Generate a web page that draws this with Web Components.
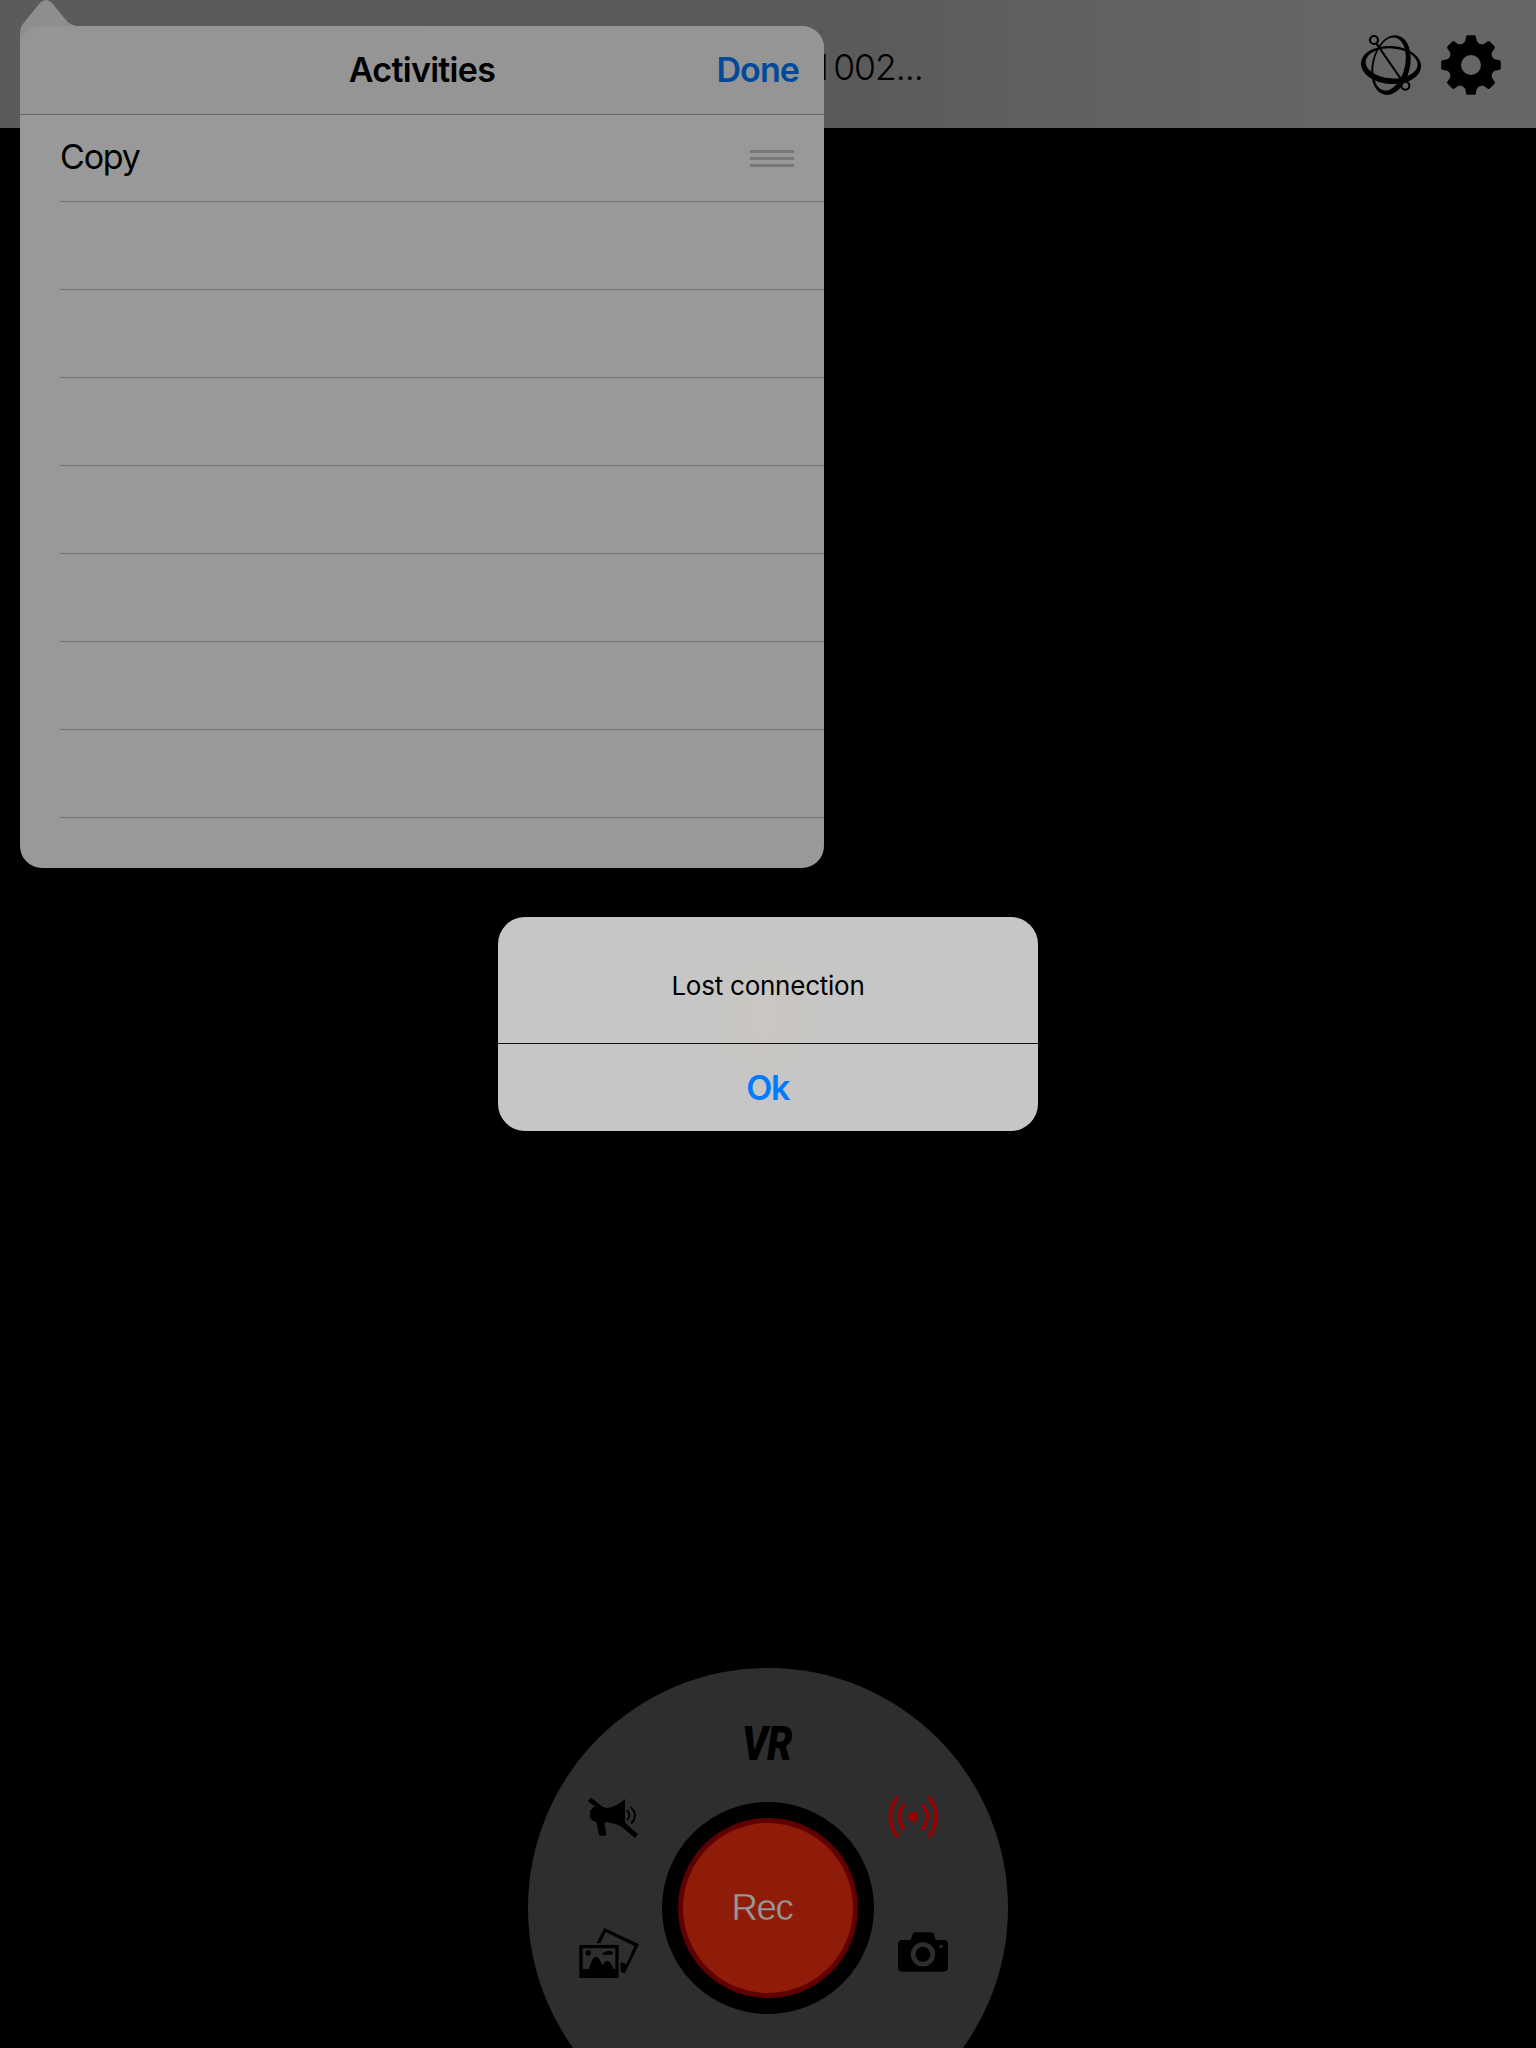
<!DOCTYPE html>
<html lang="en">
<head>
<meta charset="utf-8">
<title>Camera remote</title>
<style>
html,body{margin:0;background:#000}
body{width:1536px;height:2048px;overflow:hidden;font-family:Inter,"Liberation Sans",sans-serif;color:#000}
</style>
</head>
<body>
<camera-screen></camera-screen>
<script>
const define = (name, html) => customElements.define(name, class extends HTMLElement {
  constructor() {
    super();
    this.attachShadow({ mode: 'open' }).innerHTML = html;
  }
});

/* Eight-tooth gear outline with scooped valleys between the teeth. */
const gearPath = () => {
  const rot = (x, y, a) => {
    const c = Math.cos(a), s = Math.sin(a);
    return (x * c - y * s).toFixed(2) + ' ' + (x * s + y * c).toFixed(2);
  };
  let d = '';
  for (let i = 0; i < 8; i++) {
    const a = i * Math.PI / 4;
    d += (i ? 'A19 19 0 0 0 ' : 'M') + rot(-17.5, -71, a);
    d += 'L' + rot(-14.5, -86, a) + 'Q' + rot(-13.5, -89.5, a) + ' ' + rot(-10, -89.5, a);
    d += 'L' + rot(10, -89.5, a) + 'Q' + rot(13.5, -89.5, a) + ' ' + rot(14.5, -86, a);
    d += 'L' + rot(17.5, -71, a);
  }
  d += 'A19 19 0 0 0 ' + rot(-17.5, -71, 0) + 'Z';
  return d + 'M30 0A30 30 0 1 0 -30 0A30 30 0 1 0 30 0Z';
};

define('orbit-icon', `
<style>:host{display:block;width:62px;height:62px}svg{display:block}</style>
<svg width="62" height="62" viewBox="60 72 186 186">
  <g fill-rule="evenodd">
    <path transform="rotate(4 153 165)" d="M62.500 165a90.500 57 0 1 0 181 0a90.500 57 0 1 0-181 0ZM76.500 160a78 45 0 1 0 156 0a78 45 0 1 0-156 0Z"/>
    <path transform="rotate(13 153 165)" d="M96 165a57 91 0 1 0 114 0a57 91 0 1 0-114 0ZM101.500 163a46.500 81 0 1 0 93 0a46.500 81 0 1 0-93 0Z"/>
  </g>
  <g fill="none" stroke="#000" stroke-width="6.500">
    <path d="M109 100L189 216"/><circle cx="102" cy="90" r="12"/><circle cx="196" cy="227" r="12"/>
  </g>
</svg>`);

define('gear-icon', `
<style>:host{display:block;width:60px;height:60px}svg{display:block}</style>
<svg width="60" height="60" viewBox="-90 -90 180 180"><path fill-rule="evenodd" d="${gearPath()}"/></svg>`);

define('top-bar', `
<style>
:host{display:flex;box-sizing:border-box;height:128px;padding-top:2px;padding-left:815px;padding-right:35px;align-items:center;
 background:linear-gradient(90deg,#5b5b5b 0,#5a5a5a 55%,#606060 68%,#656565 85%,#666 100%)}
.title{flex:1;font-size:35.500px;font-weight:300;letter-spacing:-1px;line-height:44px;padding-top:5px}
.tools{display:flex;gap:19px;align-items:center}
</style>
<div class="title"><slot></slot></div>
<div class="tools"><orbit-icon></orbit-icon><gear-icon></gear-icon></div>`);

define('activity-row', `
<style>
:host{display:flex;box-sizing:border-box;height:88px;margin-left:40px;padding-right:30px;align-items:center;justify-content:space-between;
 border-bottom:1px solid #757577;font-size:34px;line-height:40px}
:host(.tail){flex:1;height:auto;border:0}
span{margin-bottom:1px}
.grip{display:none;flex-direction:column;gap:4px;width:44px;margin-top:1px}
:host([movable]) .grip{display:flex}
i{height:3px;background:#78787b}
</style>
<span><slot></slot></span><div class="grip"><i></i><i></i><i></i></div>`);

define('activities-popover', `
<style>
:host{display:block;position:absolute;left:20px;top:0;width:804px;height:868px}
svg{display:block;height:26px;overflow:visible}
.panel{position:relative;display:flex;flex-direction:column;height:842px;border-radius:22px;overflow:hidden;background:#999}
header{display:grid;grid-template-columns:1fr auto 1fr;align-items:center;box-sizing:border-box;height:89px;padding:0 25px 1px;
 border-bottom:1px solid #69696b;background:#959595;font-size:34px;font-weight:600;line-height:42px}
.t{grid-column:2;letter-spacing:-.72px}.d{justify-self:end;color:#004a99;letter-spacing:-.9px}
.list{display:flex;flex-direction:column;flex:1;margin-top:-1px}
</style>
<svg width="80" height="26" viewBox="0 0 80 26"><path fill="#8e8e8e" d="M0 50V34C0 29 1 26.500 4 22.500L19.500 3.500Q22.500 0 26 0Q29.500 0 32.500 3.500L45 19Q50 25.700 58 26H70V50Z"/></svg>
<div class="panel">
  <header><span class="t">Activities</span><span class="d">Done</span></header>
  <div class="list">
    <activity-row movable style="letter-spacing:-1.2px">Copy</activity-row>
    <activity-row></activity-row><activity-row></activity-row><activity-row></activity-row>
    <activity-row></activity-row><activity-row></activity-row><activity-row></activity-row>
    <activity-row></activity-row><activity-row class="tail"></activity-row>
  </div>
</div>`);

define('alert-dialog', `
<style>
:host{position:absolute;left:498px;top:917px;width:540px;height:214px;border-radius:27px;overflow:hidden;display:flex;flex-direction:column;
 background:radial-gradient(ellipse 65px 75px at 265px 100px,#cac6c4 0,#c8c6c3 55%,#c6c6c6 100%) #c6c6c6}
.m{display:flex;align-items:center;justify-content:center;height:126px;border-bottom:1px solid #111114;font-size:26px;line-height:32px;letter-spacing:-.24px}
.m span{margin-top:12px}
.b{display:flex;align-items:center;justify-content:center;flex:1;color:#007aff;font-size:34px;font-weight:600;line-height:42px;letter-spacing:-1.5px}
.b span{margin-right:1px}
</style>
<div class="m"><span><slot></slot></span></div><div class="b"><span>Ok</span></div>`);

define('rec-button', `
<style>
:host{display:flex;align-items:center;justify-content:center;box-sizing:border-box;width:212px;height:212px;border-radius:50%;border:16px solid #000;background:#600000}
div{display:flex;align-items:center;justify-content:center;width:170px;height:170px;border-radius:50%;background:#8e1c09;color:#999;
 font:36.500px/44px "Liberation Sans",sans-serif;letter-spacing:-1.300px;-webkit-text-stroke:.4px #8e1c09}
span{margin:0 12px 1px 0}
</style>
<div><span><slot></slot></span></div>`);

/* Radial menu: items sit at fixed points around the record button. */
define('control-dial', `
<style>
:host{display:flex;align-items:center;justify-content:center;position:relative;flex:none;width:480px;height:480px;border-radius:50%;background:#2e2e2e}
svg,.vr{position:absolute}
.vr{left:214px;top:48px;font:italic 900 48px/56px Roboto,sans-serif;transform:scaleX(.84);transform-origin:0 50%;letter-spacing:-1px}
</style>
<div class="vr">VR</div>
<svg style="left:42px;top:112px" width="90" height="70" viewBox="0 0 270 210">
  <path d="M54 64L63 53L98 80L111 84Q142 80 165 57V128L204 163L195 174L160 145Q140 130 111 126L103 128L109 163Q108 167 102 167H92Q87 167 86 162L79 126L68 122L60 113V93L70 81L76 80Z"/>
  <g fill="none" stroke="#000" stroke-linecap="round"><path stroke-width="6" d="M172 92Q183 104 173 118"/><path stroke-width="6" d="M184 83Q206 106 185 129"/></g>
</svg>
<svg style="left:342px;top:112px" width="90" height="70" viewBox="0 0 270 210">
  <circle cx="129" cy="110" r="15" fill="#970000"/>
  <g fill="none" stroke="#970000" stroke-width="11"><path d="M102 73Q74 109 102 149"/><path d="M156 73Q187 109 156 149"/><path d="M83 50Q39 110 83 171"/><path d="M176 50Q220 110 176 171"/></g>
</svg>
<svg style="left:32px;top:242px" width="100" height="80" viewBox="0 0 300 240">
  <path fill-rule="evenodd" d="M58 105H176V204H58ZM68 115V177H87C92 158 99 140 107 140C115 140 122 152 127 166C132 158 137 153 143 153C150 153 155 163 160 177H166V115Z"/>
  <circle cx="85" cy="129" r="8"/><path d="M127 131Q128 127 134 127Q140 122 150 123Q159 124 159 129Q158 134 151 134Q140 136 129 134Z"/>
  <path d="M110 99L133 54L237 103L195 188L189 189L182 184V156L200 162L223 108L137 66L121 100Z"/>
</svg>
<svg style="left:352px;top:242px" width="90" height="80" viewBox="0 0 270 240">
  <path d="M92 90L98 73Q100 67 106 67H154Q160 67 162 73L167 90H191Q204 90 204 103V172Q204 185 191 185H67Q54 185 54 172V103Q54 90 67 90Z"/>
  <circle cx="129" cy="133" r="29.500" fill="none" stroke="#2e2e2e" stroke-width="14"/><circle cx="183" cy="109" r="5" fill="#2e2e2e"/>
</svg>
<rec-button>Rec</rec-button>`);

define('camera-screen', `
<style>
:host{display:flex;flex-direction:column;position:relative;width:1536px;height:2048px;overflow:hidden;background:#000}
main{display:flex;justify-content:center;align-items:flex-start;flex:none;height:1920px;padding-top:1540px;box-sizing:border-box}
.lead{letter-spacing:4.200px}
</style>
<top-bar><span class="lead">1</span>002...</top-bar>
<main><control-dial></control-dial></main>
<activities-popover></activities-popover>
<alert-dialog>Lost connection</alert-dialog>`);
</script>
</body>
</html>
